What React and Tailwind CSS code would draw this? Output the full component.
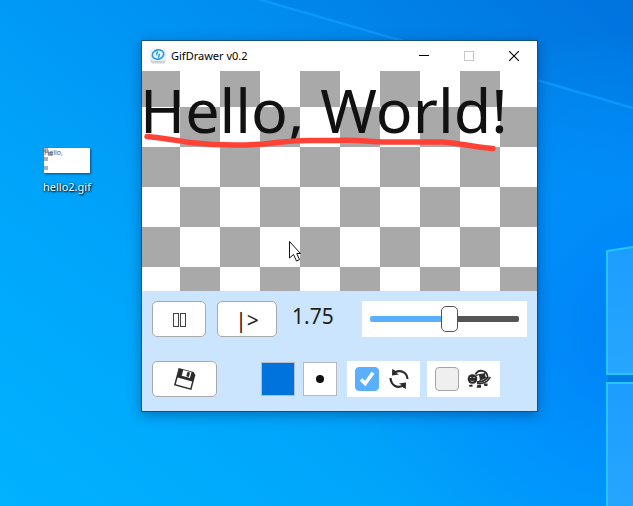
import React, { useState } from "react";

const buttonStyle =
  "flex h-9 items-center justify-center rounded-[5px] border border-[#a9a9a9] bg-white text-[#222]";

function Wallpaper() {
  return (
    <svg
      className="absolute inset-0 h-full w-full"
      viewBox="0 0 633 506"
      preserveAspectRatio="xMaxYMid slice"
      aria-hidden="true"
    >
      <defs>
        <linearGradient id="sky" x1="0" y1="1" x2="1" y2="0">
          <stop offset="0" stopColor="#00b2ff" />
          <stop offset="0.35" stopColor="#00a4fa" />
          <stop offset="0.65" stopColor="#0090f2" />
          <stop offset="1" stopColor="#0074e0" />
        </linearGradient>
        <radialGradient id="glow" cx="633" cy="330" r="300" gradientUnits="userSpaceOnUse">
          <stop offset="0" stopColor="#0080f4" />
          <stop offset="0.5" stopColor="#0090ff" stopOpacity="0.7" />
          <stop offset="1" stopColor="#0098ff" stopOpacity="0" />
        </radialGradient>
        <linearGradient id="pane" x1="0" y1="0" x2="0" y2="1">
          <stop offset="0" stopColor="#1c9dff" />
          <stop offset="1" stopColor="#27a6ff" />
        </linearGradient>
      </defs>
      <rect width="633" height="506" fill="url(#sky)" />
      <rect width="633" height="506" fill="url(#glow)" />
      <path d="M258 0L633 108V0Z" fill="#0068d8" opacity="0.1" />
      <path d="M258 -1L633 108" stroke="#0c9bff" strokeWidth="2.5" opacity="0.85" />
      <path d="M608 378H633" stroke="#0078dc" strokeWidth="8" opacity="0.7" />
      <path d="M607 251L640 246V374H607Z" fill="url(#pane)" stroke="#23c5fb" strokeWidth="2" />
      <path d="M607 383H640V512H607Z" fill="url(#pane)" stroke="#23c5fb" strokeWidth="2" />
    </svg>
  );
}

function DesktopFile() {
  return (
    <a
      href="#hello2"
      className="absolute left-[43px] top-[148px] flex flex-col items-center gap-1 text-white"
    >
      <svg
        width="46"
        height="25"
        viewBox="0 0 46 25"
        className="shadow-[1px_1px_2px_rgba(0,40,90,0.7)]"
        aria-hidden="true"
      >
        <rect width="46" height="25" fill="#fff" />
        <path d="M0 0H4V4H0ZM4 4H9V8H4ZM0 9H4V13H0ZM0 18H4V22H0Z" fill="#b0b0b0" />
        <text x="0" y="7" fontSize="7" fontFamily="Noto Sans, sans-serif" fill="#555">
          Hello,
        </text>
      </svg>
      <span className="text-[11px] leading-5 [text-shadow:1px_1px_2px_#000,0_0_2px_rgba(0,0,0,0.7)]">
        hello2.gif
      </span>
    </a>
  );
}

function AppIcon() {
  return (
    <svg width="16" height="16" viewBox="0 0 16 16" aria-hidden="true">
      <rect x="0.5" y="1" width="15" height="14.5" rx="3" fill="#cfd3d8" />
      <rect x="0.5" y="0.5" width="15" height="12.5" rx="3" fill="#eef2f6" />
      <g transform="rotate(-18 8 6.5)" fill="none" stroke="#249be8">
        <ellipse cx="8" cy="6.5" rx="5.8" ry="4.6" strokeWidth="1.6" />
        <path d="M8.800 3.800C6.800 4.200 7.800 6 6 6.600M7.200 9.200C9.200 8.800 8.200 7 10 6.400" strokeWidth="1.500" />
      </g>
    </svg>
  );
}

function TitleBar() {
  return (
    <header className="flex h-[30px] items-center bg-white pl-2">
      <AppIcon />
      <h1 className="ml-[5px] flex-1 text-[11px] text-black">GifDrawer v0.2</h1>
      <button type="button" aria-label="Minimize" className="flex h-full w-[45px] items-center justify-center">
        <svg width="10" height="10" viewBox="0 0 10 10" aria-hidden="true">
          <path d="M0 4.5H10" stroke="#000" />
        </svg>
      </button>
      <button type="button" aria-label="Maximize" disabled className="flex h-full w-[45px] items-center justify-center">
        <svg width="10" height="10" viewBox="0 0 10 10" aria-hidden="true">
          <rect x="0.5" y="0.5" width="9" height="9" fill="none" stroke="#c8c8c8" />
        </svg>
      </button>
      <button type="button" aria-label="Close" className="flex h-full w-[46px] items-center justify-center">
        <svg width="10" height="10" viewBox="0 0 10 10" aria-hidden="true">
          <path d="M0 0L10 10M10 0L0 10" stroke="#000" strokeWidth="1.1" />
        </svg>
      </button>
    </header>
  );
}

function DrawingCanvas() {
  return (
    <main className="relative h-[220px] bg-[conic-gradient(#fff_25%,#a9a9a9_0_50%,#fff_0_75%,#a9a9a9_0)] bg-size-[80px_80px] bg-position-[-2px_-4px]">
      <p className="-ml-0.5 flex gap-4 whitespace-nowrap text-[61px] leading-[78px] text-[#111]">
        <span>Hello,</span>
        <span>World!</span>
      </p>
      <svg className="absolute inset-0" width="395" height="220" viewBox="0 0 395 220" aria-hidden="true">
        <path
          d="M5 65.5C22 67 32 69 48 71.5C70 74 95 75 122 73C137 71 150 69.5 168 69.5H192C215 68 225 71 245 71H300C318 72 330 76 351 77.5"
          fill="none"
          stroke="#ff4236"
          strokeWidth="5.5"
          strokeLinecap="round"
          strokeLinejoin="round"
        />
        <path
          d="M147.500 170.500V187L151.500 183.500L154.500 190L157.500 188.700L154.800 182.500H158.500Z"
          fill="#fff"
          stroke="#111"
        />
      </svg>
    </main>
  );
}

function FloppyIcon() {
  return (
    <svg width="24" height="24" viewBox="0 0 24 24" aria-hidden="true">
      <g transform="rotate(15 12 12)">
        <path d="M3 3H18.500L21 5.500V21H3Z" fill="#2b2b2b" />
        <path d="M4.500 12.500H19.500V19.500H4.500Z" fill="#fff" />
        <path d="M8 3.800H16.500V9.800H8Z" fill="#fff" />
        <path d="M12.500 4.500H15.200V9H12.500Z" fill="#2b2b2b" />
      </g>
    </svg>
  );
}

function LoopIcon() {
  return (
    <svg width="24" height="22" viewBox="-2 0 24 22" aria-hidden="true">
      <path d="M6 4.200C12 1.500 18 4.500 18.500 11M14 17.800C8 20.500 2 17.500 1.500 10" fill="none" stroke="#2b2b2b" strokeWidth="2.200" />
      <path d="M3.200 1L3 7.500L10 6.500L7.500 5L6 2.600ZM16.800 21L17 14.500L10 15.500L12.500 17L14 19.400Z" fill="#2b2b2b" />
    </svg>
  );
}

function TurtleIcon() {
  return (
    <svg width="24" height="20" viewBox="0 0 24 20" aria-hidden="true">
      <path
        d="M8.500 5.500C10 2.300 12.500 1.500 15 1.800C18.500 2.200 20.500 4.800 20.800 8.500C18 12 14 13 10 13"
        fill="#fff"
        stroke="#2b2b2b"
        strokeWidth="1.800"
      />
      <path
        d="M12.500 5.500L17.200 5L18.300 9L13.500 10.800ZM9 6.500L12.500 5.500M17.200 5L18.500 3.500M18.300 9L21 8.500M13.500 10.800L12 13"
        fill="#2b2b2b"
        stroke="#2b2b2b"
        strokeWidth="1.200"
      />
      <path d="M10 14.500C15 14.800 19.500 13.500 21.500 10.500L23.500 8" fill="none" stroke="#2b2b2b" strokeWidth="1.500" />
      <circle cx="5.500" cy="10" r="4.800" fill="#2b2b2b" />
      <path d="M2 16L5.500 15.500V17.800H2.500ZM10.500 16L14 15.500V18.800H9.500ZM16.500 14.500L20.500 14.500V17H17.500Z" fill="#2b2b2b" />
      <path d="M3.200 8h1v1h-1zM6.500 8h1v1h-1z" fill="#fff" />
      <path d="M3.500 11.800C4.500 12.600 5.800 12.600 6.800 12" fill="none" stroke="#fff" strokeWidth="0.600" />
    </svg>
  );
}

function IconCheckbox({ label, defaultChecked, children }) {
  return (
    <label className="flex h-9 w-[73px] items-center gap-2 bg-white pl-2">
      <span className="grid size-6 place-items-center">
        <input
          type="checkbox"
          aria-label={label}
          defaultChecked={defaultChecked}
          className="peer col-start-1 row-start-1 size-6 appearance-none rounded-[4px] border border-[#a5a5a5] bg-[#f0efef] checked:border-[#5aafff] checked:bg-[#5aafff]"
        />
        <svg
          className="pointer-events-none invisible col-start-1 row-start-1 peer-checked:visible"
          width="18"
          height="18"
          viewBox="0 0 18 18"
          aria-hidden="true"
        >
          <path d="M3 9.500L7.200 13.500L15 2.800" fill="none" stroke="#fff" strokeWidth="3.600" />
        </svg>
      </span>
      {children}
    </label>
  );
}

function SpeedSlider({ value, onChange }) {
  const fill = (8.5 + (value / 3.25) * 132) / 149;
  return (
    <div className="flex h-9 w-[165px] items-center bg-white px-2">
      <input
        type="range"
        aria-label="Time"
        min="0"
        max="3.25"
        step="0.05"
        value={value}
        onChange={(event) => onChange(Number(event.target.value))}
        style={{ "--fill": `${fill * 100}%` }}
        className="h-[26px] w-full appearance-none bg-transparent [&::-webkit-slider-runnable-track]:h-1.5 [&::-webkit-slider-runnable-track]:rounded-[2px] [&::-webkit-slider-runnable-track]:bg-[linear-gradient(to_right,#5aafff_var(--fill),#555558_var(--fill))] [&::-webkit-slider-thumb]:-mt-2.5 [&::-webkit-slider-thumb]:h-[26px] [&::-webkit-slider-thumb]:w-[17px] [&::-webkit-slider-thumb]:appearance-none [&::-webkit-slider-thumb]:rounded-[5px] [&::-webkit-slider-thumb]:border [&::-webkit-slider-thumb]:border-[#555] [&::-webkit-slider-thumb]:bg-white"
      />
    </div>
  );
}

function Controls() {
  const [time, setTime] = useState(1.75);
  return (
    <footer className="flex flex-col gap-6 bg-[#cce5ff] px-2.5 pt-2.5 pb-3.5">
      <div className="flex">
        <button type="button" aria-label="Pause" className={`${buttonStyle} w-[54px] gap-px pt-0.5`}>
          <span className="h-3.5 w-1.5 border border-[#444]" />
          <span className="h-3.5 w-1.5 border border-[#444]" />
        </button>
        <button type="button" aria-label="Next frame" className={`${buttonStyle} ml-[11px] w-[60px] pt-1 text-[21px]`}>
          |&gt;
        </button>
        <output className="ml-[15px] text-[21px] leading-[30px] text-[#222]">{time.toFixed(2)}</output>
        <div className="ml-auto">
          <SpeedSlider value={time} onChange={setTime} />
        </div>
      </div>
      <div className="flex items-center">
        <button type="button" aria-label="Save" className={`${buttonStyle} w-[65px]`}>
          <FloppyIcon />
        </button>
        <button
          type="button"
          aria-label="Pen colour"
          className="ml-11 size-[34px] border border-[#b4bcc6] bg-[#0074dc]"
        />
        <button
          type="button"
          aria-label="Pen size"
          className="ml-2 flex size-[34px] items-center justify-center border border-[#b8b8bc] bg-white"
        >
          <span className="size-2 rounded-full bg-[#111]" />
        </button>
        <div className="ml-2.5 flex gap-[7px]">
          <IconCheckbox label="Loop" defaultChecked>
            <LoopIcon />
          </IconCheckbox>
          <IconCheckbox label="Slow motion">
            <TurtleIcon />
          </IconCheckbox>
        </div>
      </div>
    </footer>
  );
}

export default function App() {
  return (
    <div className="relative min-h-screen overflow-hidden bg-[#0098f8] font-['Noto_Sans',sans-serif]">
      <Wallpaper />
      <DesktopFile />
      <section
        aria-label="GifDrawer"
        className="absolute left-[141px] top-10 w-[397px] border border-[#14507c] shadow-[0_3px_12px_rgba(0,30,80,0.4)]"
      >
        <TitleBar />
        <DrawingCanvas />
        <Controls />
      </section>
    </div>
  );
}
